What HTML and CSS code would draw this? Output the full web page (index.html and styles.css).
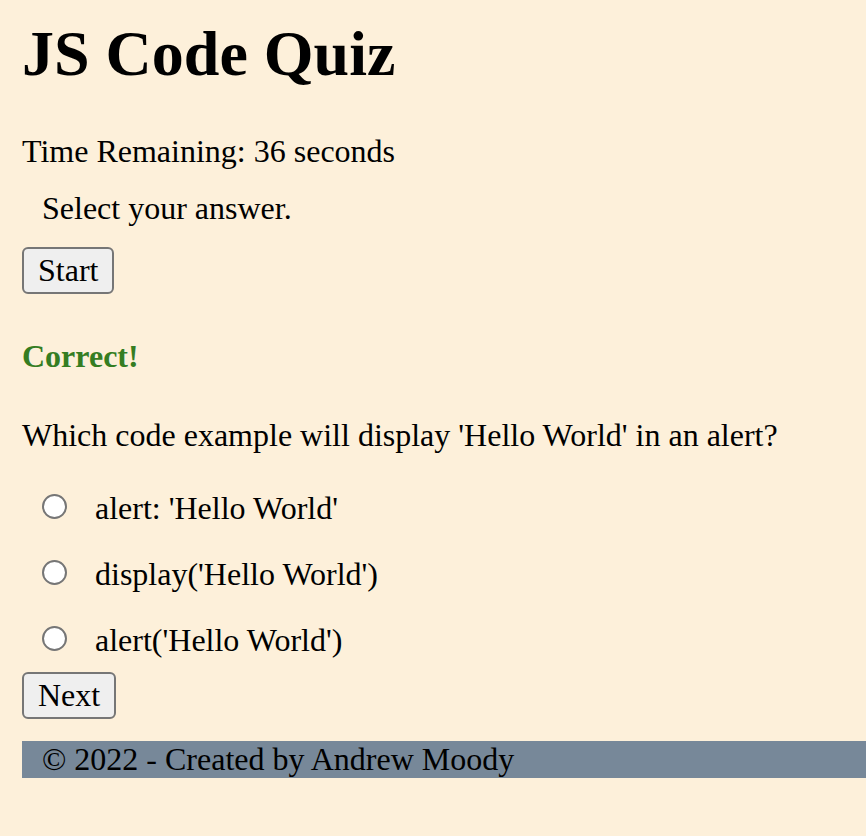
FILE: index.html
```html
<!DOCTYPE html>
<html lang="en">
<head>
<meta charset="utf-8">
<title>JS Code Quiz</title>
<link rel="stylesheet" href="styles.css">
</head>
<body>
<header class="header">
  <h1 class="title">JS Code Quiz</h1>
</header>
<main class="quiz">
  <div class="timer">Time Remaining: 36 seconds</div>
  <p class="instructions">Select your answer.</p>
  <button class="btn" type="button">Start</button>
  <h4 class="feedback">Correct!</h4>
  <p class="question">Which code example will display 'Hello World' in an alert?</p>
  <div class="options">
    <label class="option"><input class="radio" type="radio" name="answer"><span>alert: 'Hello World'</span></label>
    <label class="option"><input class="radio" type="radio" name="answer"><span>display('Hello World')</span></label>
    <label class="option"><input class="radio" type="radio" name="answer"><span>alert('Hello World')</span></label>
  </div>
  <button class="btn" type="button">Next</button>
</main>
<footer class="footer">© 2022 - Created by Andrew Moody</footer>
</body>
</html>
```

FILE: styles.css
```css
html {
  background: #fdf0da;
}

body {
  margin: 0;
  padding: 17px 0 0 22px;
  font-family: "Liberation Serif", "Times New Roman", serif;
  font-size: 32px;
  line-height: normal;
  color: #000;
}

.title {
  margin: 0 0 42px 0;
  font-size: 64px;
  font-weight: bold;
}

.quiz {
  display: flex;
  flex-direction: column;
  align-items: flex-start;
}

.timer {
  margin: 0;
}

.instructions {
  margin: 20px 0 20px 0;
  padding-left: 20px;
}

.btn {
  box-sizing: border-box;
  height: 47px;
  font-family: inherit;
  font-size: 32px;
  line-height: normal;
  color: #000;
  background: #efefef;
  border: 2px solid #767676;
  border-radius: 6px;
  padding: 3px 14px;
  margin: 0;
}

.feedback {
  margin: 44px 0 42px 0;
  font-size: 32px;
  font-weight: bold;
  color: #357d22;
}

.question {
  margin: 0;
}

.options {
  display: flex;
  flex-direction: column;
  gap: 29px;
  margin: 36px 0 13px 0;
}

.option {
  display: flex;
  align-items: center;
  height: 37px;
}

.radio {
  appearance: none;
  -webkit-appearance: none;
  box-sizing: border-box;
  width: 25px;
  height: 25px;
  margin: 0 28px 4px 20px;
  border: 2px solid #767676;
  border-radius: 50%;
  background: #fff;
  flex: none;
}

.footer {
  margin-top: 22px;
  padding-left: 20px;
  background: #778899;
  line-height: 37px;
  height: 37px;
  white-space: nowrap;
}
```
